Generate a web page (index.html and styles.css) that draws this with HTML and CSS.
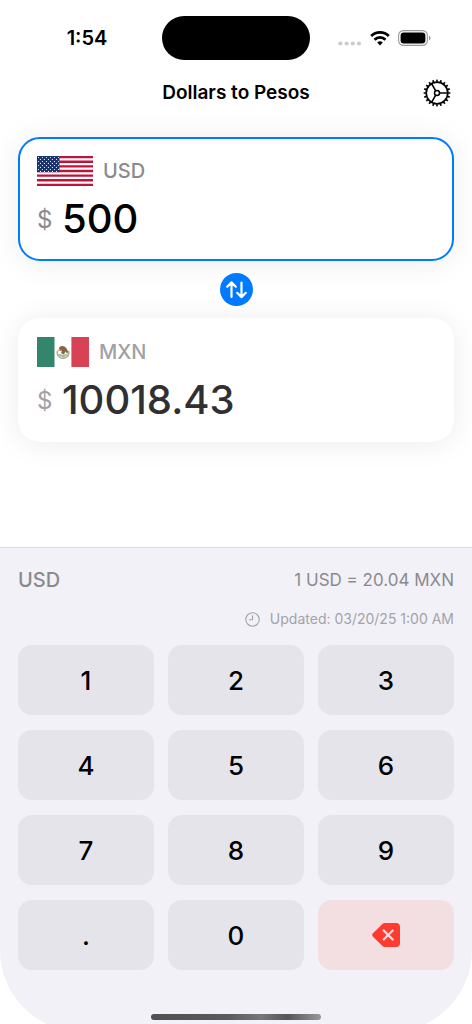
FILE: index.html
```html
<!DOCTYPE html>
<html lang="en">
<head>
<meta charset="utf-8">
<meta name="viewport" content="width=device-width, initial-scale=1">
<title>Dollars to Pesos</title>
<link rel="stylesheet" href="styles.css">
</head>
<body>
<div class="screen">
  <div class="status">
    <time class="clock">1:54</time>
    <div class="island"></div>
    <div class="indicators">
      <svg class="cell" width="24" height="18" viewBox="0 0 24 18" fill="#cbcbcb"><circle cx="2.4" cy="14.500" r="2.1"/><circle cx="8.6" cy="14.500" r="2.1"/><circle cx="14.8" cy="14.500" r="2.1"/><circle cx="21" cy="14.500" r="2.1"/></svg>
      <svg class="wifi" width="20" height="16" viewBox="0 0 20 16" fill="none" stroke="#000" stroke-width="2.8"><path d="M1.2 5.9a12.6 12.6 0 0 1 17.6 0"/><path d="M4.5 9.7a7.8 7.8 0 0 1 11 0"/><path d="M10 15.4 7.2 12.5a4 4 0 0 1 5.6 0z" fill="#000" stroke="none"/></svg>
      <svg class="battery" width="33" height="16" viewBox="0 0 33 16"><rect x=".6" y=".6" width="28.8" height="14.8" rx="4.8" fill="none" stroke="#999" stroke-width="1.1"/><rect x="2.6" y="2.6" width="24.8" height="10.8" rx="3.2"/><path d="M31 5.4q1.6.8 1.6 2.6T31 10.6z" fill="#999"/></svg>
    </div>
  </div>
  <header class="bar">
    <h1>Dollars to Pesos</h1>
    <button class="settings" type="button" aria-label="Settings">
      <svg width="28" height="28" viewBox="0 0 28 28" fill="none" stroke="#000"><circle cx="14" cy="14" r="12.300" stroke-width="2.200" pathLength="80" stroke-dasharray="1.700 2.300" stroke-dashoffset=".85"/><circle cx="14" cy="14" r="10.800" stroke-width="1.700"/><circle cx="14" cy="14" r="2.500" stroke-width="1.500"/><path d="M16.500 14h8M12.700 11.800l-4-7M12.700 16.200l-4 7" stroke-width="1.600"/></svg>
    </button>
  </header>
  <main class="converter">
    <section class="card active">
      <div class="currency">
        <svg width="56" height="30" viewBox="0 0 56 30">
          <defs><pattern id="stars" width="4" height="4" patternUnits="userSpaceOnUse"><circle cx="1.5" cy="1.5" r=".55" fill="#fff"/><circle cx="3.4" cy="3.4" r=".55" fill="#fff"/></pattern></defs>
          <rect width="56" height="30" fill="#fff"/>
          <path d="M0 1.15h56M0 5.77h56M0 10.38h56M0 15h56M0 19.62h56M0 24.23h56M0 28.85h56" stroke="#bd143c" stroke-width="2.3"/>
          <rect width="22.5" height="16.1" fill="#1a3268"/><rect width="22.5" height="16.1" fill="url(#stars)"/>
        </svg>
        <label for="amount">USD</label>
      </div>
      <div class="money"><span class="sign">$</span><input id="amount" class="amount" type="text" inputmode="none" value="500"></div>
    </section>
    <button class="swap" type="button" aria-label="Swap currencies">
      <svg width="33" height="33" viewBox="0 0 33 33" fill="none" stroke="#fff" stroke-width="2.200" stroke-linecap="round" stroke-linejoin="round"><path d="M11.500 24V9.500M7.200 13.700l4.300-4.300 4.300 4.300M21.500 9.500V24M17.200 19.800l4.300 4.300 4.300-4.300"/></svg>
    </button>
    <section class="card target">
      <div class="currency">
        <svg width="52" height="30" viewBox="0 0 52 30">
          <rect width="52" height="30" fill="#fff"/><rect width="17.5" height="30" fill="#33856b"/><rect x="34.4" width="17.6" height="30" fill="#d84255"/>
          <path d="M20.3 14c-.7 6 4 7.200 6 7.200s6.300-1.500 5.500-7.200" fill="none" stroke="#a9b38a" stroke-width="1.500"/>
          <path d="M22 17.500q4 2.500 8 0" fill="none" stroke="#78c9cf" stroke-width="2"/>
          <path d="M22 10.500q4-3 7 .2l2 3.300-.6 3-2-2.500-1.400 3-3-1.500 1-2.500-2.500.5z" fill="#8d6040"/>
          <path d="M20.500 13.500l3-1M25 19.500l3 .4" stroke="#cfa45b" stroke-width="1.200"/>
        </svg>
        <label for="result">MXN</label>
      </div>
      <div class="money"><span class="sign">$</span><output id="result" class="amount">10018.43</output></div>
    </section>
  </main>
  <section class="panel">
    <div class="summary"><span class="code">USD</span><span class="rate">1 USD = 20.04 MXN</span></div>
    <p class="updated"><svg width="15" height="15" viewBox="0 0 15 15" fill="none" stroke="#a3a3a8" stroke-width="1.100"><circle cx="7.500" cy="7.500" r="6.700"/><path d="M7.500 3.200v4.600H4"/></svg><span>Updated: 03/20/25 1:00 AM</span></p>
    <div class="keys">
      <button type="button">1</button><button type="button">2</button><button type="button">3</button>
      <button type="button">4</button><button type="button">5</button><button type="button">6</button>
      <button type="button">7</button><button type="button">8</button><button type="button">9</button>
      <button type="button">.</button><button type="button">0</button>
      <button type="button" class="delete" aria-label="Delete"><svg width="28" height="24" viewBox="0 0 28 24"><path d="M10.200 1.200Q11.400 0 13 0H24q4 0 4 4V20q0 4-4 4H13q-1.600 0-2.800-1.200L1 13.700Q-.7 12 1 10.300z" fill="#ff3b30"/><path d="M11.700 7.500l9 9M20.700 7.500l-9 9" stroke="#f5e0e1" stroke-width="2.200" stroke-linecap="round"/></svg></button>
    </div>
    <div class="home"></div>
  </section>
</div>
</body>
</html>
```
FILE: styles.css
```css
* { box-sizing: border-box; }
body { margin: 0; background: #fff; color: #000; font-family: Inter, "Liberation Sans", sans-serif; }
button { margin: 0; padding: 0; border: 0; font: inherit; color: inherit; cursor: pointer; }
svg { display: block; flex: none; }
.screen { min-height: 100vh; display: flex; flex-direction: column; overflow: hidden; }
.status { display: grid; grid-template-columns: 1fr 148px 1fr; align-items: center; padding: 16px 0 0; }
.clock { padding-left: 12px; text-align: center; font-size: 20px; line-height: 24px; font-weight: 600; }
.island { height: 44px; border-radius: 22px; background: #000; }
.indicators { display: flex; align-items: center; padding-left: 28px; }
.wifi { margin-left: 8px; }
.battery { margin-left: 8px; }
.bar { display: grid; grid-template-columns: 28px 1fr 28px; align-items: center; padding: 19px 21px 0; }
h1 { grid-column: 2; margin: 0; text-align: center; font-size: 19px; line-height: 28px; font-weight: 600; }
.settings { background: none; }
.converter { display: flex; flex-direction: column; align-items: stretch; gap: 12px; padding: 30px 18px 0; }
.card { height: 124px; padding: 19px; border-radius: 22px; background: #fff; box-shadow: 0 2px 30px rgba(0, 0, 0, 0.08); }
.active { padding: 17px; border: 2px solid #007aff; }
.currency { display: flex; align-items: center; gap: 10px; height: 30px; color: #8a8a8e; font-size: 20px; font-weight: 500; }
.target .currency, .target .sign { color: #a1a1a5; }
.money { display: flex; align-items: center; gap: 10px; height: 48px; margin-top: 9px; }
.sign { width: 15px; color: #8a8a8e; font-size: 24px; }
.amount { flex: 1; min-width: 0; padding: 0; border: 0; outline: 0; background: none; color: #000; font-family: inherit; font-size: 40px; line-height: 48px; font-weight: 500; }
.target .amount { color: #303032; }
.swap { align-self: center; border-radius: 50%; background: #007aff; }
.panel { flex: 1; margin: 105px 0 -8px; padding: 18px 18px 12px; border-top: 1px solid #dedee2; border-radius: 0 0 82px 82px; background: #f2f1f7; }
.summary { display: flex; justify-content: space-between; align-items: center; color: #8a8a8e; line-height: 28px; }
.code { font-size: 20px; font-weight: 500; }
.rate { font-size: 17px; }
.updated { display: flex; justify-content: flex-end; align-items: center; gap: 10px; margin: 14px 0 15px; color: #a3a3a8; font-size: 14px; line-height: 22px; }
.keys { display: grid; grid-template-columns: repeat(3, 1fr); gap: 15px 14px; }
.keys button { display: grid; place-items: center; height: 70px; border-radius: 14px; background: #e5e4ea; font-size: 26px; font-weight: 500; }
.keys .delete { background: #f3dfe1; }
.home { width: 170px; height: 6px; margin: 44px auto 0; border-radius: 3px; background: linear-gradient(90deg, #505052, #5a5a5c 45%, #77777a 65%, #555557 80%, #98989b); }
```
